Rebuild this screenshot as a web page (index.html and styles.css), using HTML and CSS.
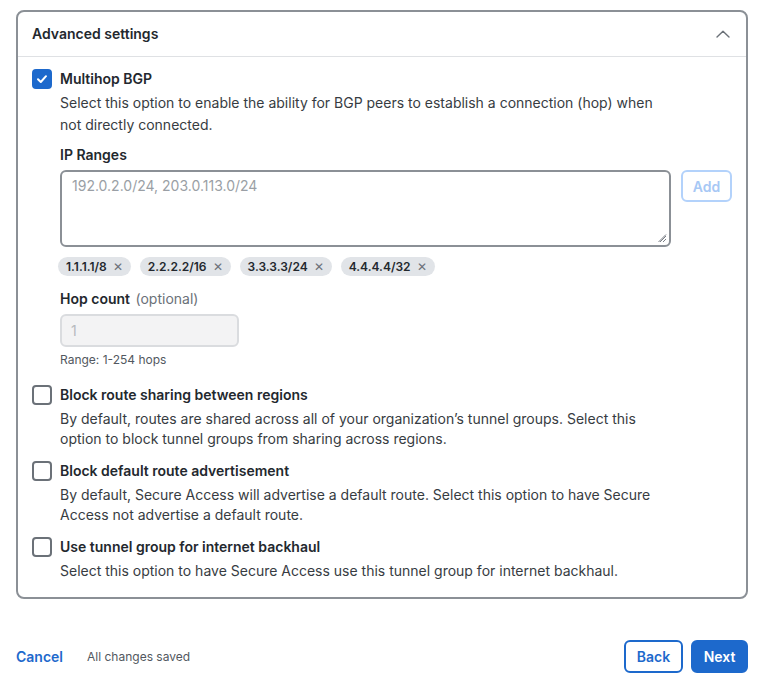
FILE: index.html
```html
<!DOCTYPE html>
<html>
<head>
<meta charset="utf-8">
<link rel="stylesheet" href="styles.css">
</head>
<body>
<div class="page">
  <section class="card">
    <header class="card-header">
      <h2 class="card-title">Advanced settings</h2>
      <svg class="chevron" width="14" height="8" viewBox="0 0 14 8"><path d="M1 7 L7 1.2 L13 7" fill="none" stroke="#6b7178" stroke-width="1.4" stroke-linecap="round" stroke-linejoin="round"/></svg>
    </header>
    <div class="card-body">
      <div class="option">
        <span class="checkbox checked">
          <svg width="12" height="10" viewBox="0 0 12 10"><path d="M2 5.2 L4.8 8 L10 2.2" fill="none" stroke="#fff" stroke-width="2" stroke-linecap="round" stroke-linejoin="round"/></svg>
        </span>
        <div class="option-content">
          <div class="option-label">Multihop BGP</div>
          <p class="option-desc first">Select this option to enable the ability for BGP peers to establish a connection (hop) when not directly connected.</p>

          <div class="field ip-field">
            <div class="field-label">IP Ranges</div>
            <div class="ip-row">
              <div class="textarea"><span class="placeholder">192.0.2.0/24, 203.0.113.0/24</span>
                <svg class="grip" width="9" height="9" viewBox="0 0 9 9"><path d="M8 2 L2 8 M8 5 L5 8 M8 0.5 L0.5 8" stroke="#6b7178" stroke-width="0.9"/></svg>
              </div>
              <button class="btn-add">Add</button>
            </div>
            <div class="tags">
              <span class="tag">1.1.1.1/8 <span class="x">✕</span></span>
              <span class="tag">2.2.2.2/16 <span class="x">✕</span></span>
              <span class="tag">3.3.3.3/24 <span class="x">✕</span></span>
              <span class="tag">4.4.4.4/32 <span class="x">✕</span></span>
            </div>
          </div>

          <div class="field hop-field">
            <div class="field-label">Hop count <span class="optional">(optional)</span></div>
            <div class="input-disabled">1</div>
            <div class="hint">Range: 1-254 hops</div>
          </div>
        </div>
      </div>

      <div class="option">
        <span class="checkbox"></span>
        <div class="option-content">
          <div class="option-label">Block route sharing between regions</div>
          <p class="option-desc">By default, routes are shared across all of your organization’s tunnel groups. Select this option to block tunnel groups from sharing across regions.</p>
        </div>
      </div>

      <div class="option">
        <span class="checkbox"></span>
        <div class="option-content">
          <div class="option-label">Block default route advertisement</div>
          <p class="option-desc">By default, Secure Access will advertise a default route. Select this option to have Secure Access not advertise a default route.</p>
        </div>
      </div>

      <div class="option">
        <span class="checkbox"></span>
        <div class="option-content">
          <div class="option-label">Use tunnel group for internet backhaul</div>
          <p class="option-desc">Select this option to have Secure Access use this tunnel group for internet backhaul.</p>
        </div>
      </div>
    </div>
  </section>

  <footer class="footer">
    <div class="footer-left">
      <a class="link-cancel">Cancel</a>
      <span class="saved">All changes saved</span>
    </div>
    <div class="footer-right">
      <button class="btn btn-outline">Back</button>
      <button class="btn btn-primary">Next</button>
    </div>
  </footer>
</div>
</body>
</html>
```

FILE: styles.css
```css
* { box-sizing: border-box; }
html, body { margin: 0; padding: 0; background: #fff; }
body {
  font-family: Inter, "Noto Sans", sans-serif;
  color: #23282e;
  font-size: 14px;
}
.page {
  padding: 10px 16px 0 16px;
}
.card {
  border: 2px solid #8b9096;
  border-radius: 8px;
  width: 732px;
}
.card-header {
  height: 45px;
  display: flex;
  align-items: center;
  justify-content: space-between;
  padding: 0 16px 1px 14px;
  border-bottom: 1px solid #dfe1e4;
}
.card-title {
  margin: 0;
  font-size: 14px;
  font-weight: 600;
  color: #23282e;
}
.card-body {
  padding: 12px 14px 4px 14px;
}
.option {
  display: flex;
  gap: 8px;
  margin-bottom: 12px;
}
.checkbox {
  flex: none;
  width: 20px;
  height: 20px;
  border: 2px solid #6b7178;
  border-radius: 4px;
  display: flex;
  align-items: center;
  justify-content: center;
}
.checkbox.checked {
  background: #1d69cc;
  border-color: #1d69cc;
}
.option-content { flex: 1; }
.option-label {
  font-weight: 600;
  line-height: 20px;
  color: #23282e;
}
.option-desc {
  margin: 4px 0 0 0;
  line-height: 20px;
  color: #373c42;
  max-width: 600px;
}
.option-desc.first {
  margin-top: 3px;
  line-height: 22px;
}
.field-label {
  font-weight: 600;
  line-height: 20px;
  color: #23282e;
}
.optional { font-weight: 400; color: #6b7178; margin-left: 2px; }
.ip-field { margin-top: 9px; }
.ip-row {
  display: flex;
  gap: 10px;
  margin-top: 5px;
}
.textarea {
  position: relative;
  width: 611px;
  height: 77px;
  border: 2px solid #8b9096;
  border-radius: 6px;
  padding: 4px 10px;
}
.placeholder { color: #9a9fa5; line-height: 20px; }
.grip { position: absolute; right: 2px; bottom: 2px; }
.btn-add {
  height: 32px;
  width: 51px;
  border: 2px solid #b3d2fb;
  border-radius: 6px;
  background: #fff;
  color: #a7c8f5;
  font-family: inherit;
  font-size: 14px;
  font-weight: 600;
  padding: 0;
}
.tags {
  display: flex;
  gap: 9px;
  margin-top: 10px;
  margin-left: -2px;
}
.tag {
  display: inline-flex;
  align-items: center;
  gap: 6px;
  height: 19px;
  padding: 0 8px;
  border-radius: 10px;
  background: #e1e4e8;
  font-size: 12px;
  font-weight: 600;
  color: #23282e;
}
.tag .x { font-weight: 400; color: #6b7178; font-size: 12px; }
.hop-field { margin-top: 13px; }
.input-disabled {
  margin-top: 5px;
  width: 179px;
  height: 33px;
  border: 2px solid #dadcdf;
  border-radius: 6px;
  background: #f3f3f4;
  color: #b6babe;
  padding: 5px 9px;
  line-height: 20px;
}
.hint {
  margin-top: 4px;
  font-size: 12px;
  color: #525860;
  line-height: 18px;
  margin-bottom: 4px;
}
.footer {
  display: flex;
  justify-content: space-between;
  align-items: center;
  margin-top: 41px;
  width: 732px;
}
.footer-left { display: flex; align-items: center; gap: 24px; }
.link-cancel { color: #1d69cc; font-weight: 600; font-size: 14px; }
.saved { font-size: 12px; color: #525860; }
.footer-right { display: flex; gap: 8px; }
.btn {
  height: 33px;
  border-radius: 6px;
  font-family: inherit;
  font-size: 14px;
  font-weight: 600;
  padding: 0;
}
.btn-outline {
  width: 59px;
  border: 2px solid #1d69cc;
  background: #fff;
  color: #1d69cc;
}
.btn-primary {
  width: 57px;
  border: 2px solid #1d69cc;
  background: #1d69cc;
  color: #fff;
}
```
